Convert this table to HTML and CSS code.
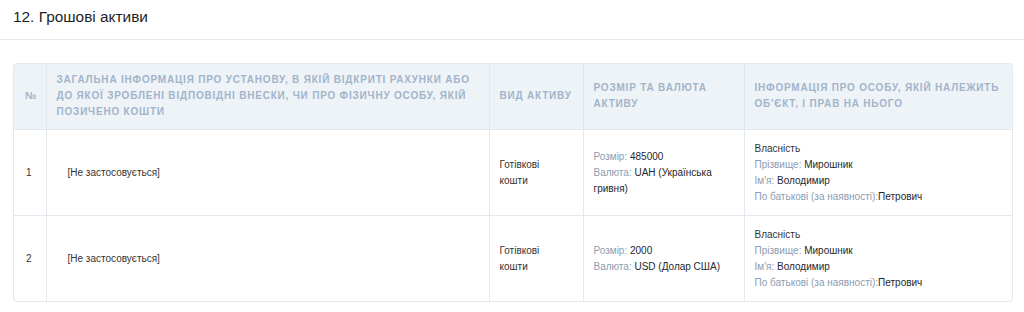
FILE: index.html
```html
<!DOCTYPE html>
<html lang="uk">
<head>
<meta charset="utf-8">
<title>Грошові активи</title>
<link rel="stylesheet" href="styles.css">
</head>
<body>
<div class="section-head">
  <h2 class="section-title">12. Грошові активи</h2>
</div>
<div class="table-wrap">
  <table class="assets">
    <colgroup>
      <col class="c-num">
      <col class="c-info">
      <col class="c-kind">
      <col class="c-size">
      <col class="c-owner">
    </colgroup>
    <thead>
      <tr>
        <th class="num">№</th>
        <th>Загальна інформація про установу, в якій відкриті рахунки або до якої зроблені відповідні внески, чи про фізичну особу, якій позичено кошти</th>
        <th>Вид активу</th>
        <th>Розмір та валюта активу</th>
        <th>Інформація про особу, якій належить об'єкт, і прав на нього</th>
      </tr>
    </thead>
    <tbody>
      <tr>
        <td class="num">1</td>
        <td class="inst">[Не застосовується]</td>
        <td class="kind">Готівкові кошти</td>
        <td>
          <div><span class="lbl">Розмір:</span> <span class="val">485000</span></div>
          <div><span class="lbl">Валюта:</span> <span class="val">UAH (Українська гривня)</span></div>
        </td>
        <td>
          <div>Власність</div>
          <div><span class="lbl">Прізвище:</span> <span class="val">Мирошник</span></div>
          <div><span class="lbl">Ім'я:</span> <span class="val">Володимир</span></div>
          <div><span class="lbl">По батькові (за наявності):</span><span class="val">Петрович</span></div>
        </td>
      </tr>
      <tr>
        <td class="num">2</td>
        <td class="inst">[Не застосовується]</td>
        <td class="kind">Готівкові кошти</td>
        <td>
          <div><span class="lbl">Розмір:</span> <span class="val">2000</span></div>
          <div><span class="lbl">Валюта:</span> <span class="val">USD (Долар США)</span></div>
        </td>
        <td>
          <div>Власність</div>
          <div><span class="lbl">Прізвище:</span> <span class="val">Мирошник</span></div>
          <div><span class="lbl">Ім'я:</span> <span class="val">Володимир</span></div>
          <div><span class="lbl">По батькові (за наявності):</span><span class="val">Петрович</span></div>
        </td>
      </tr>
    </tbody>
  </table>
</div>
</body>
</html>
```
FILE: styles.css
```css
html, body {
  margin: 0;
  padding: 0;
  background: #ffffff;
  font-family: "Liberation Sans", Arial, sans-serif;
  color: #2f3640;
}

.section-head {
  padding: 8px 13px 13px;
  border-bottom: 1px solid #e6e6e6;
}

.section-title {
  margin: 0;
  font-size: 15.4px;
  line-height: 18px;
  font-weight: 400;
  color: #1f1f1f;
}

.table-wrap {
  margin: 23px 11px 0 13px;
  width: 998px;
  border: 1px solid #e3e8ee;
  border-radius: 4px;
  overflow: hidden;
}

.assets {
  width: 998px;
  table-layout: fixed;
  border-collapse: collapse;
}

.c-num { width: 32px; }
.c-info { width: 443px; }
.c-kind { width: 94px; }
.c-size { width: 161px; }
.c-owner { width: 268px; }

.assets th {
  background: #eef3f8;
  color: #a2b3ca;
  font-size: 10px;
  font-weight: 700;
  letter-spacing: 0.8px;
  text-transform: uppercase;
  text-align: left;
  line-height: 16px;
  padding: 8px 10px 9px;
  vertical-align: middle;
  border-bottom: 1px solid #e3e8ee;
}

.assets th + th,
.assets td + td {
  border-left: 1px solid #e3e8ee;
}

.assets th.num {
  padding: 8px 0 9px 11px;
  letter-spacing: 0;
}

.assets tbody tr + tr td {
  border-top: 1px solid #e3e8ee;
}

.assets td {
  font-size: 10px;
  line-height: 16px;
  padding: 11px 10px 10px;
  vertical-align: middle;
  color: #333333;
}

.assets td.num {
  padding-left: 12px;
  padding-right: 0;
}

.assets td.inst {
  padding-left: 21px;
}

.assets td.kind {
  padding-right: 20px;
}

.lbl {
  color: #8c9cb0;
}

.val {
  color: #24282e;
}
```
